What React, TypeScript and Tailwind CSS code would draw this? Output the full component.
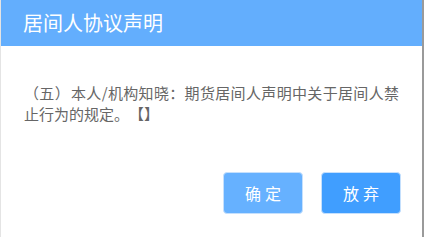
export default function App() {
  return (
    <div
      className="w-[425px] h-[237px] bg-white overflow-hidden"
      style={{ fontFamily: '"Noto Sans CJK SC", "Noto Sans", sans-serif' }}
    >
      <div className="w-[424px] h-full border-l border-l-[#e4e4e4] border-r-2 border-r-[#9a9a9a] flex flex-col">
        {/* header */}
        <div className="h-[46px] bg-[#63aefd] flex items-center pl-[22px]">
          <h2 className="text-[20px] text-white leading-none">居间人协议声明</h2>
        </div>

        {/* body */}
        <div className="pt-[36px] pl-[23px] pr-[23px]">
          <p
            lang="zh-CN"
            className="text-[15px] leading-[21px] text-[#666666] text-justify [text-spacing-trim:space-all]"
          >
            <span className="inline-block w-[15px] text-right">（</span>五
            <span className="inline-block w-[16px] text-left">）</span>
            本人/机构知晓：期货居间人声明中关于居间人禁止行为的规定。【】
          </p>
        </div>

        {/* footer */}
        <div className="mt-auto mb-[23px] flex justify-end gap-[18px] pr-[21px]">
          <button className="w-[80px] h-[42px] rounded-[4px] border border-[#c5e0fd] bg-[#66b1ff] text-white text-[16px] tracking-[4px] pl-[4px]">
            确定
          </button>
          <button className="w-[80px] h-[42px] rounded-[4px] border border-[#c5e0fd] bg-[#409eff] text-white text-[16px] tracking-[4px] pl-[4px]">
            放弃
          </button>
        </div>
      </div>
    </div>
  );
}
